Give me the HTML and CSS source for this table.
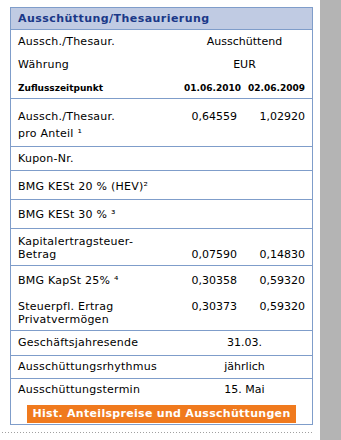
FILE: index.html
```html
<!DOCTYPE html>
<html lang="de">
<head>
<meta charset="utf-8">
<title>Ausschüttung/Thesaurierung</title>
<link rel="stylesheet" href="styles.css">
</head>
<body>
<div class="page">
  <main class="main">
    <section class="box">
      <h2 class="box-head">Ausschüttung/Thesaurierung</h2>

      <div class="group g1">
        <div class="row r23"><span class="lbl">Aussch./Thesaur.</span><span class="span2">Ausschüttend</span></div>
        <div class="row r23"><span class="lbl">Währung</span><span class="span2">EUR</span></div>
        <div class="row rdates"><span class="lbl">Zuflusszeitpunkt</span><span class="v1">01.06.2010</span><span class="v2">02.06.2009</span></div>
      </div>

      <div class="group g2">
        <div class="row r17"><span class="lbl">Aussch./Thesaur.<br>pro Anteil ¹</span><span class="v1 top">0,64559</span><span class="v2 top">1,02920</span></div>
      </div>

      <div class="group g3">
        <div class="row"><span class="lbl">Kupon-Nr.</span></div>
      </div>

      <div class="group g4">
        <div class="row"><span class="lbl">BMG KESt 20 % (HEV)²</span></div>
      </div>

      <div class="group g5">
        <div class="row"><span class="lbl">BMG KESt 30 % ³</span></div>
      </div>

      <div class="group g6">
        <div class="row r13"><span class="lbl">Kapitalertragsteuer-<br>Betrag</span><span class="v1 bottom">0,07590</span><span class="v2 bottom">0,14830</span></div>
      </div>

      <div class="group g7">
        <div class="row r13"><span class="lbl">BMG KapSt 25% ⁴</span><span class="v1">0,30358</span><span class="v2">0,59320</span></div>
        <div class="row r13 mt13"><span class="lbl">Steuerpfl. Ertrag<br>Privatvermögen</span><span class="v1 top">0,30373</span><span class="v2 top">0,59320</span></div>
      </div>

      <div class="group g8">
        <div class="row"><span class="lbl">Geschäftsjahresende</span><span class="span2">31.03.</span></div>
      </div>

      <div class="group g9">
        <div class="row"><span class="lbl">Ausschüttungsrhythmus</span><span class="span2">jährlich</span></div>
      </div>

      <div class="group g10">
        <div class="row"><span class="lbl">Ausschüttungstermin</span><span class="span2">15. Mai</span></div>
        <div class="btn-wrap"><a class="btn" href="#">Hist. Anteilspreise und Ausschüttungen</a></div>
      </div>
    </section>
    <div class="dots"></div>
  </main>
  <aside class="side"></aside>
</div>
</body>
</html>
```

FILE: styles.css
```css
* { box-sizing: border-box; }

html, body {
  margin: 0;
  padding: 0;
  background: #ffffff;
}

body {
  font-family: "DejaVu Sans", Verdana, sans-serif;
  font-size: 11px;
  color: #000000;
}

.page {
  display: flex;
  min-height: 440px;
}

.main {
  width: 320px;
  padding-top: 7px;
}

.side {
  width: 21px;
  background: #b4b4b4;
}

.box {
  margin-left: 10px;
  width: 303px;
  border: 1px solid #7f9dca;
}

.box-head {
  margin: 0;
  height: 22px;
  padding: 0 0 0 7px;
  background: #c0cbe3;
  border-bottom: 1px solid #7f9dca;
  color: #1a3888;
  font-size: 11px;
  font-weight: bold;
  line-height: 21px;
  letter-spacing: 0.45px;
}

.group {
  border-bottom: 1px solid #7f9dca;
  padding: 0 7px;
}

.group:last-child {
  border-bottom: none;
}

.row {
  display: grid;
  grid-template-columns: 1fr 53px 68px;
  line-height: 22px;
}

.lbl { grid-column: 1; letter-spacing: 0.25px; }
.v1 { grid-column: 2; text-align: right; white-space: nowrap; }
.v2 { grid-column: 3; text-align: right; white-space: nowrap; }
.span2 { grid-column: 2 / 4; text-align: center; white-space: nowrap; }
.top { align-self: start; }
.bottom { align-self: end; }

.r23 { line-height: 23px; }

.rdates {
  font-size: 9px;
  font-weight: bold;
  line-height: 20px;
  padding-top: 2px;
}

.rdates .lbl { letter-spacing: 0; }

.r17 { line-height: 17px; }
.r13 { line-height: 13px; }
.mt13 { margin-top: 13px; }

.g1 { height: 69px; }
.g2 { padding-top: 9px; padding-bottom: 4px; }
.g3 .row { line-height: 22px; padding-top: 1px; }
.g4 .row { line-height: 25px; padding-top: 3px; }
.g5 .row { line-height: 26px; padding-top: 2px; }
.g6 { padding-top: 6px; padding-bottom: 4px; }
.g7 { padding-top: 8px; padding-bottom: 4px; }
.g8 .row { line-height: 24px; }
.g9 .row { line-height: 22px; }
.g10 .row { line-height: 22px; }
.g10 { padding-bottom: 1px; }

.btn-wrap {
  display: flex;
  justify-content: center;
  margin-top: 4px;
}

.btn {
  display: block;
  height: 18px;
  padding: 0 5px;
  background: #f07a1e;
  color: #ffffff;
  font-weight: bold;
  font-size: 11px;
  line-height: 18px;
  letter-spacing: 0.3px;
  text-decoration: none;
  white-space: nowrap;
}

.dots {
  margin: 7px 0 0 2px;
  width: 310px;
  height: 1px;
  background-image: linear-gradient(to right, #a0a0a0 1px, transparent 1px);
  background-size: 3px 1px;
}
```
